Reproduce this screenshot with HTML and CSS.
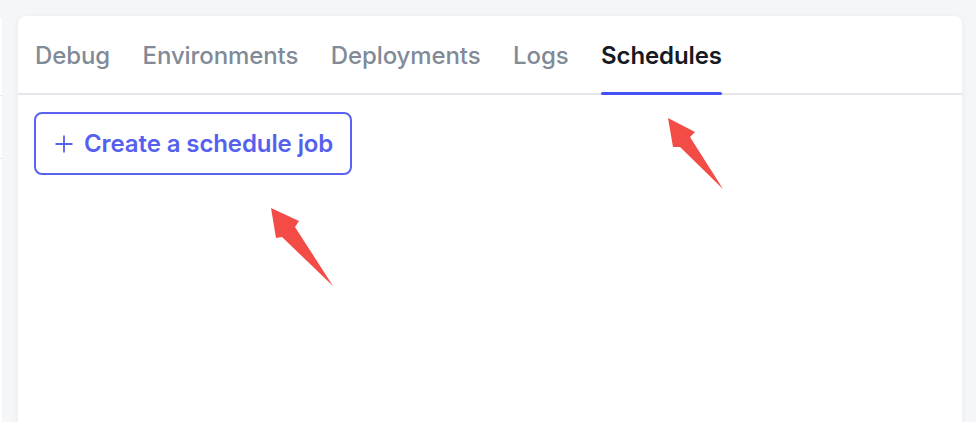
FILE: index.html
```html
<!DOCTYPE html>
<html>
<head>
<meta charset="utf-8">
<link rel="stylesheet" href="styles.css">
</head>
<body>
<div class="page">
  <aside class="side">
    <div class="side-row"></div>
    <div class="side-row"></div>
  </aside>
  <main class="card">
    <nav class="tabs">
      <a class="tab">Debug</a>
      <a class="tab">Environments</a>
      <a class="tab">Deployments</a>
      <a class="tab">Logs</a>
      <a class="tab active">Schedules</a>
    </nav>
    <div class="content">
      <button class="create-btn">
        <svg class="plus" viewBox="0 0 18 18" width="18" height="18"><path d="M9 0.5v17M0.5 9h17" stroke="currentColor" stroke-width="1.8" fill="none"/></svg>
        <span>Create a schedule job</span>
      </button>
    </div>
  </main>
</div>
<svg class="annotations" width="976" height="422" viewBox="0 0 976 422">
  <polygon fill="#f34c47" points="271,208 299,221 295,227 333,286 282,237 276,238"/>
  <polygon fill="#f34c47" points="668,118 695,132 690,137 723,189 680,147 673,147"/>
</svg>
</body>
</html>
```

FILE: styles.css
```css
html, body {
  margin: 0;
  padding: 0;
  background: #f5f6f8;
  font-family: Inter, "Noto Sans", sans-serif;
  height: 422px;
  overflow: hidden;
}
.page {
  display: flex;
  gap: 16px;
  padding: 16px 14px 0 0;
  height: 406px;
}
.side {
  width: 2px;
  margin-top: 2px;
  background: #ffffff;
  border-top-right-radius: 6px;
  display: flex;
  flex-direction: column;
  padding-top: 77px;
  gap: 62px;
}
.side-row {
  height: 1px;
  background: #e6e7ea;
}
.card {
  flex: 1;
  background: #ffffff;
  border-radius: 8px 8px 0 0;
  box-shadow: 0 1px 6px rgba(20, 30, 50, 0.06);
  display: flex;
  flex-direction: column;
}
.tabs {
  display: flex;
  gap: 32.5px;
  padding: 0 17px;
  height: 77px;
  border-bottom: 2px solid #e6e5eb;
  align-items: stretch;
}
.tab {
  display: flex;
  align-items: center;
  padding-top: 2px;
  font-size: 24px;
  font-weight: 500;
  letter-spacing: -0.1px;
  color: #818a97;
  position: relative;
}
.tab.active {
  color: #171a22;
  font-weight: 600;
}
.tab.active::after {
  content: "";
  position: absolute;
  left: 0;
  right: 0;
  bottom: -2px;
  height: 3px;
  border-radius: 2px;
  background: #4451f5;
}
.content {
  padding: 17px 16px;
}
.create-btn {
  display: inline-flex;
  align-items: center;
  gap: 11px;
  height: 63px;
  padding: 0 17px 0 19px;
  border: 2px solid #5a62f3;
  border-radius: 8px;
  background: #ffffff;
  color: #5660f0;
  font-family: Inter, "Noto Sans", sans-serif;
  font-size: 24px;
  font-weight: 600;
  letter-spacing: -0.1px;
  cursor: pointer;
}
.plus {
  display: block;
}
.annotations {
  position: absolute;
  left: 0;
  top: 0;
  pointer-events: none;
}
```
